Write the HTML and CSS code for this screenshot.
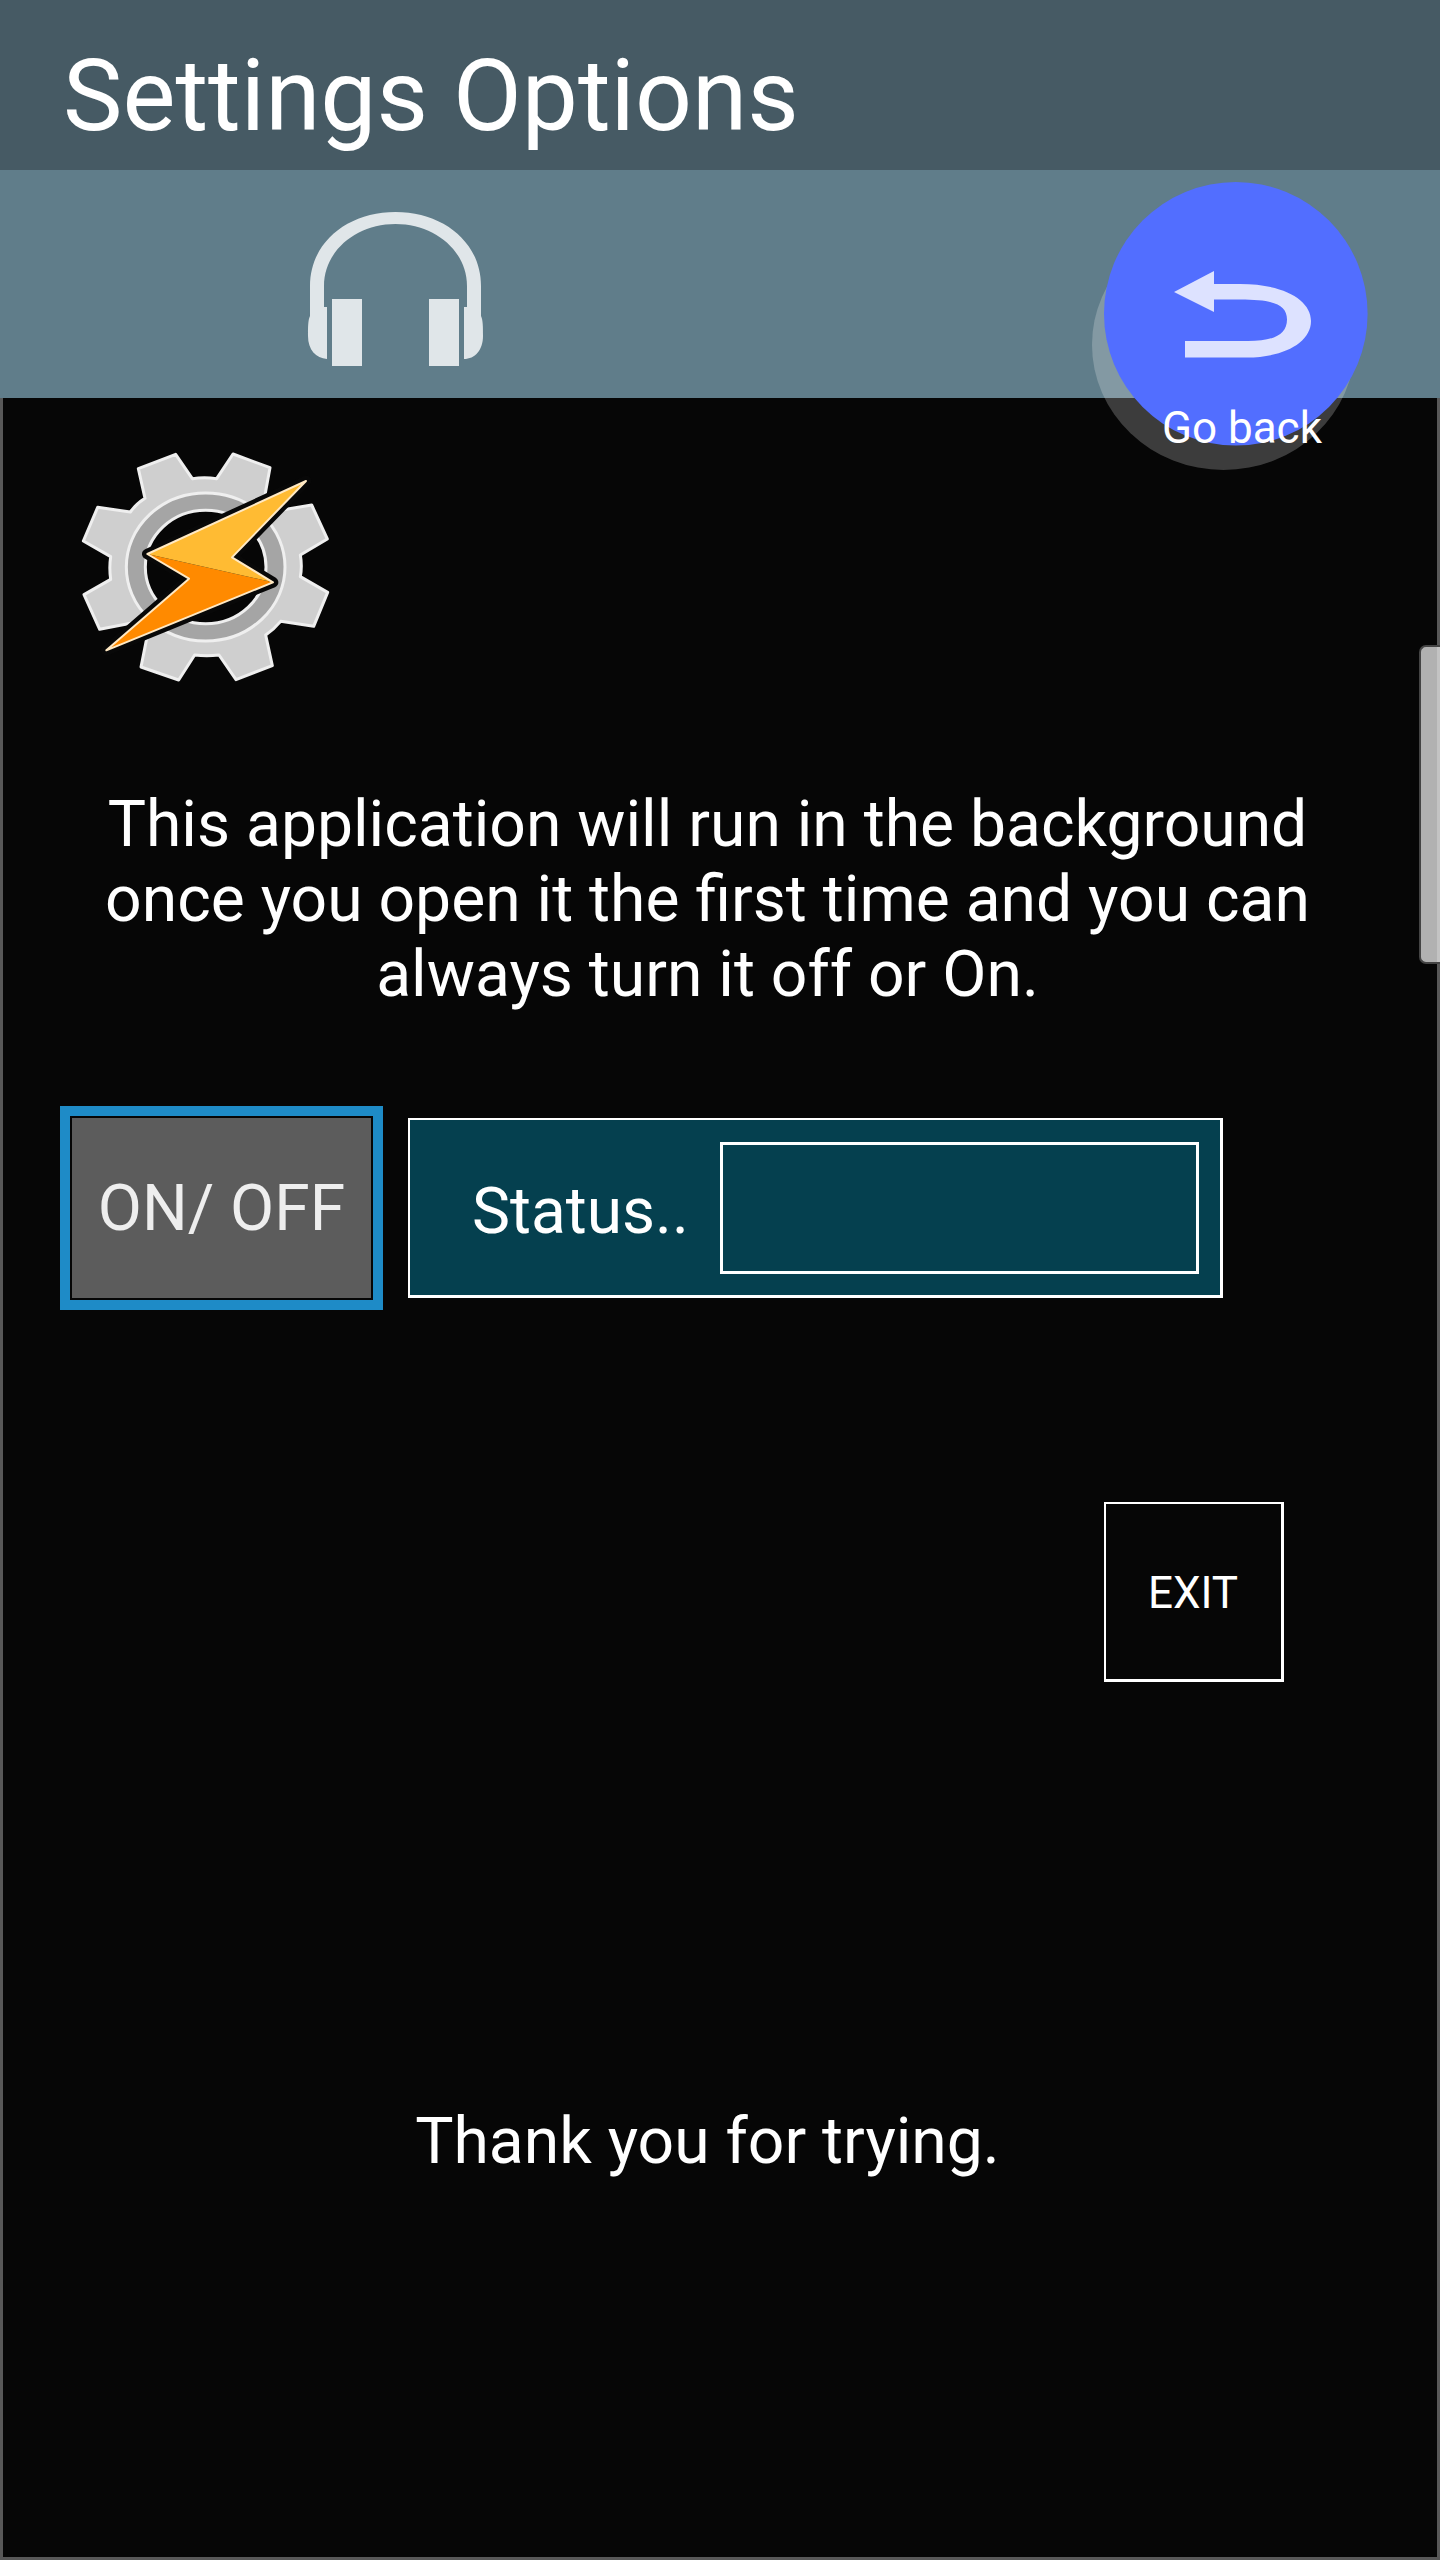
FILE: index.html
```html
<!DOCTYPE html>
<html lang="en">
<head>
<meta charset="utf-8">
<title>Settings Options</title>
<link rel="stylesheet" href="styles.css">
</head>
<body>
<div class="screen">
  <header class="title-bar"><h1 class="title">Settings Options</h1></header>
  <nav class="toolbar">
    <svg class="headphones" viewBox="0 0 210 210" fill="#e0e6e9">
      <path d="M20 126V96C20 52 58 22 105.500 22S191 52 191 96V126C193 130 193 137 193 146C193 160 185 169 174 169V117H177V96C177 61 145 34 105.500 34S34 61 34 96V117H37V169C26 168 18 160 18 146C18 137 18 130 20 126Z"/>
      <path d="M42 109H72V176H42ZM139 109H169V176H139Z"/>
    </svg>
    <button class="back">
      <svg class="back-art" viewBox="0 0 276 290">
        <ellipse cx="131.500" cy="162.800" rx="131.500" ry="125.200" fill="#fff" fill-opacity=".22"/>
        <circle cx="143.800" cy="131.800" r="131.800" fill="#526eff"/>
        <path d="M82 110L122 89V102H148C192 102 219 118 219 139C219 161 191 175.500 155 175.500H93V159H156C181 159 195 153 195 137.500S180 117.500 148 117.500H122V130Z" fill="#dde2ff"/>
      </svg>
      <span class="back-label">Go back</span>
    </button>
  </nav>
  <main class="content">
    <svg class="logo" viewBox="0 0 840 810">
      <path fill="#cfcfcf" stroke="#efefef" stroke-width="9" stroke-linejoin="round" d="M205 116L317 73L367 146Q403 141 440 146L489 72L600 113L585 195L640 239L725 225L772 327L691 375Q697 408 691 440L773 487L731 589L632 574Q613 597 587 615L607 707L498 749L447 675Q410 679 374 675L326 750L213 711L230 626L182 580L89 598L42 494L122 448Q117 413 122 380L40 333L83 232L181 246Q199 221 225 205Z"/>
      <ellipse cx="407" cy="411" rx="238" ry="222" fill="#a5a5a5" stroke="#efefef" stroke-width="9"/>
      <ellipse cx="407" cy="411" rx="181" ry="170" fill="#060606" stroke="#efefef" stroke-width="9"/>
      <path d="M232 372L708 153L486 382L609 457L109 661L357 446Z" fill="#080808" stroke="#080808" stroke-width="32" stroke-linejoin="round"/>
      <path d="M232 372L357 446L109 661L609 457Z" fill="#ff8a00"/>
      <path d="M232 372L708 153L486 382L609 457Z" fill="#ffbb33"/>
      <path d="M232 372L708 153L486 382L609 457L109 661L357 446Z" fill="none" stroke="#ffe9c4" stroke-width="6" stroke-linejoin="round"/>
    </svg>
    <p class="intro">This application will run in the background<br>once you open it the first time and you can<br>always turn it off or On.</p>
    <section class="controls">
      <button class="toggle">ON/ OFF</button>
      <div class="status">
        <span class="status-label">Status..</span>
        <div class="status-value"></div>
      </div>
    </section>
    <button class="exit">EXIT</button>
    <p class="thanks">Thank you for trying.</p>
    <div class="thumb"></div>
  </main>
</div>
</body>
</html>
```
FILE: styles.css
```css
* { box-sizing: border-box; }
body { margin: 0; background: #060606; font-family: Roboto, "Liberation Sans", sans-serif; color: #fff; }
h1, p { margin: 0; font-weight: 400; }
button { font: inherit; color: inherit; background: none; border: 0; border-radius: 0; padding: 0; }
.screen { width: 1440px; height: 2560px; display: flex; flex-direction: column; overflow: hidden; }
.title-bar { height: 170px; padding: 37px 0 0 63px; background: #465a64; }
.title { font-size: 100px; line-height: 117px; white-space: nowrap; }
.toolbar { position: relative; height: 228px; padding: 20px 0 0 290px; background: #607d8a; }
.headphones { display: block; width: 210px; height: 210px; }
.back { position: absolute; z-index: 1; left: 1092px; top: 12px; width: 276px; height: 290px; }
.back-art { display: block; width: 276px; height: 290px; }
.back-label { position: absolute; left: 70px; top: 220px; font-size: 44px; line-height: 52px; white-space: nowrap; }
.content { position: relative; flex: 1; display: flex; flex-direction: column; border: solid #585858; border-width: 0 3px 3px; background: #060606; }
.logo { width: 280px; height: 270px; margin: 32px 0 0 67px; }
.intro { width: 1409px; margin-top: 87px; font-size: 64.2px; line-height: 75px; text-align: center; white-space: nowrap; }
.controls { display: flex; align-items: center; gap: 25px; margin: 94px 0 0 57px; }
.toggle { width: 323px; height: 204px; border: 10px solid #1e8bc7; box-shadow: inset 0 0 0 2px #060606; background: #5c5c5c; color: #eee; font-size: 64.2px; line-height: 75px; }
.status { display: flex; align-items: center; justify-content: space-between; width: 815px; height: 180px; padding: 0 21px 0 62px; border: solid #fff; border-width: 2px 3px 3px 2px; background: #05404f; }
.status-label { font-size: 64px; line-height: 75px; padding-top: 8px; }
.status-value { width: 479px; height: 132px; border: 3px solid #fff; }
.exit { width: 180px; height: 180px; margin: 192px 0 0 1101px; padding: 3px 1px 0 0; border: solid #fff; border-width: 2px 3px 3px 2px; font-size: 44px; line-height: 52px; }
.thanks { width: 1409px; margin-top: 422px; font-size: 64.2px; line-height: 75px; text-align: center; }
.thumb { position: absolute; right: -3px; top: 247px; width: 21px; height: 319px; border: 2px solid #444; border-right: 0; border-radius: 7px 0 0 7px; background: #b1b1b1; box-shadow: inset -3px 0 #c3c3c3; }
```
